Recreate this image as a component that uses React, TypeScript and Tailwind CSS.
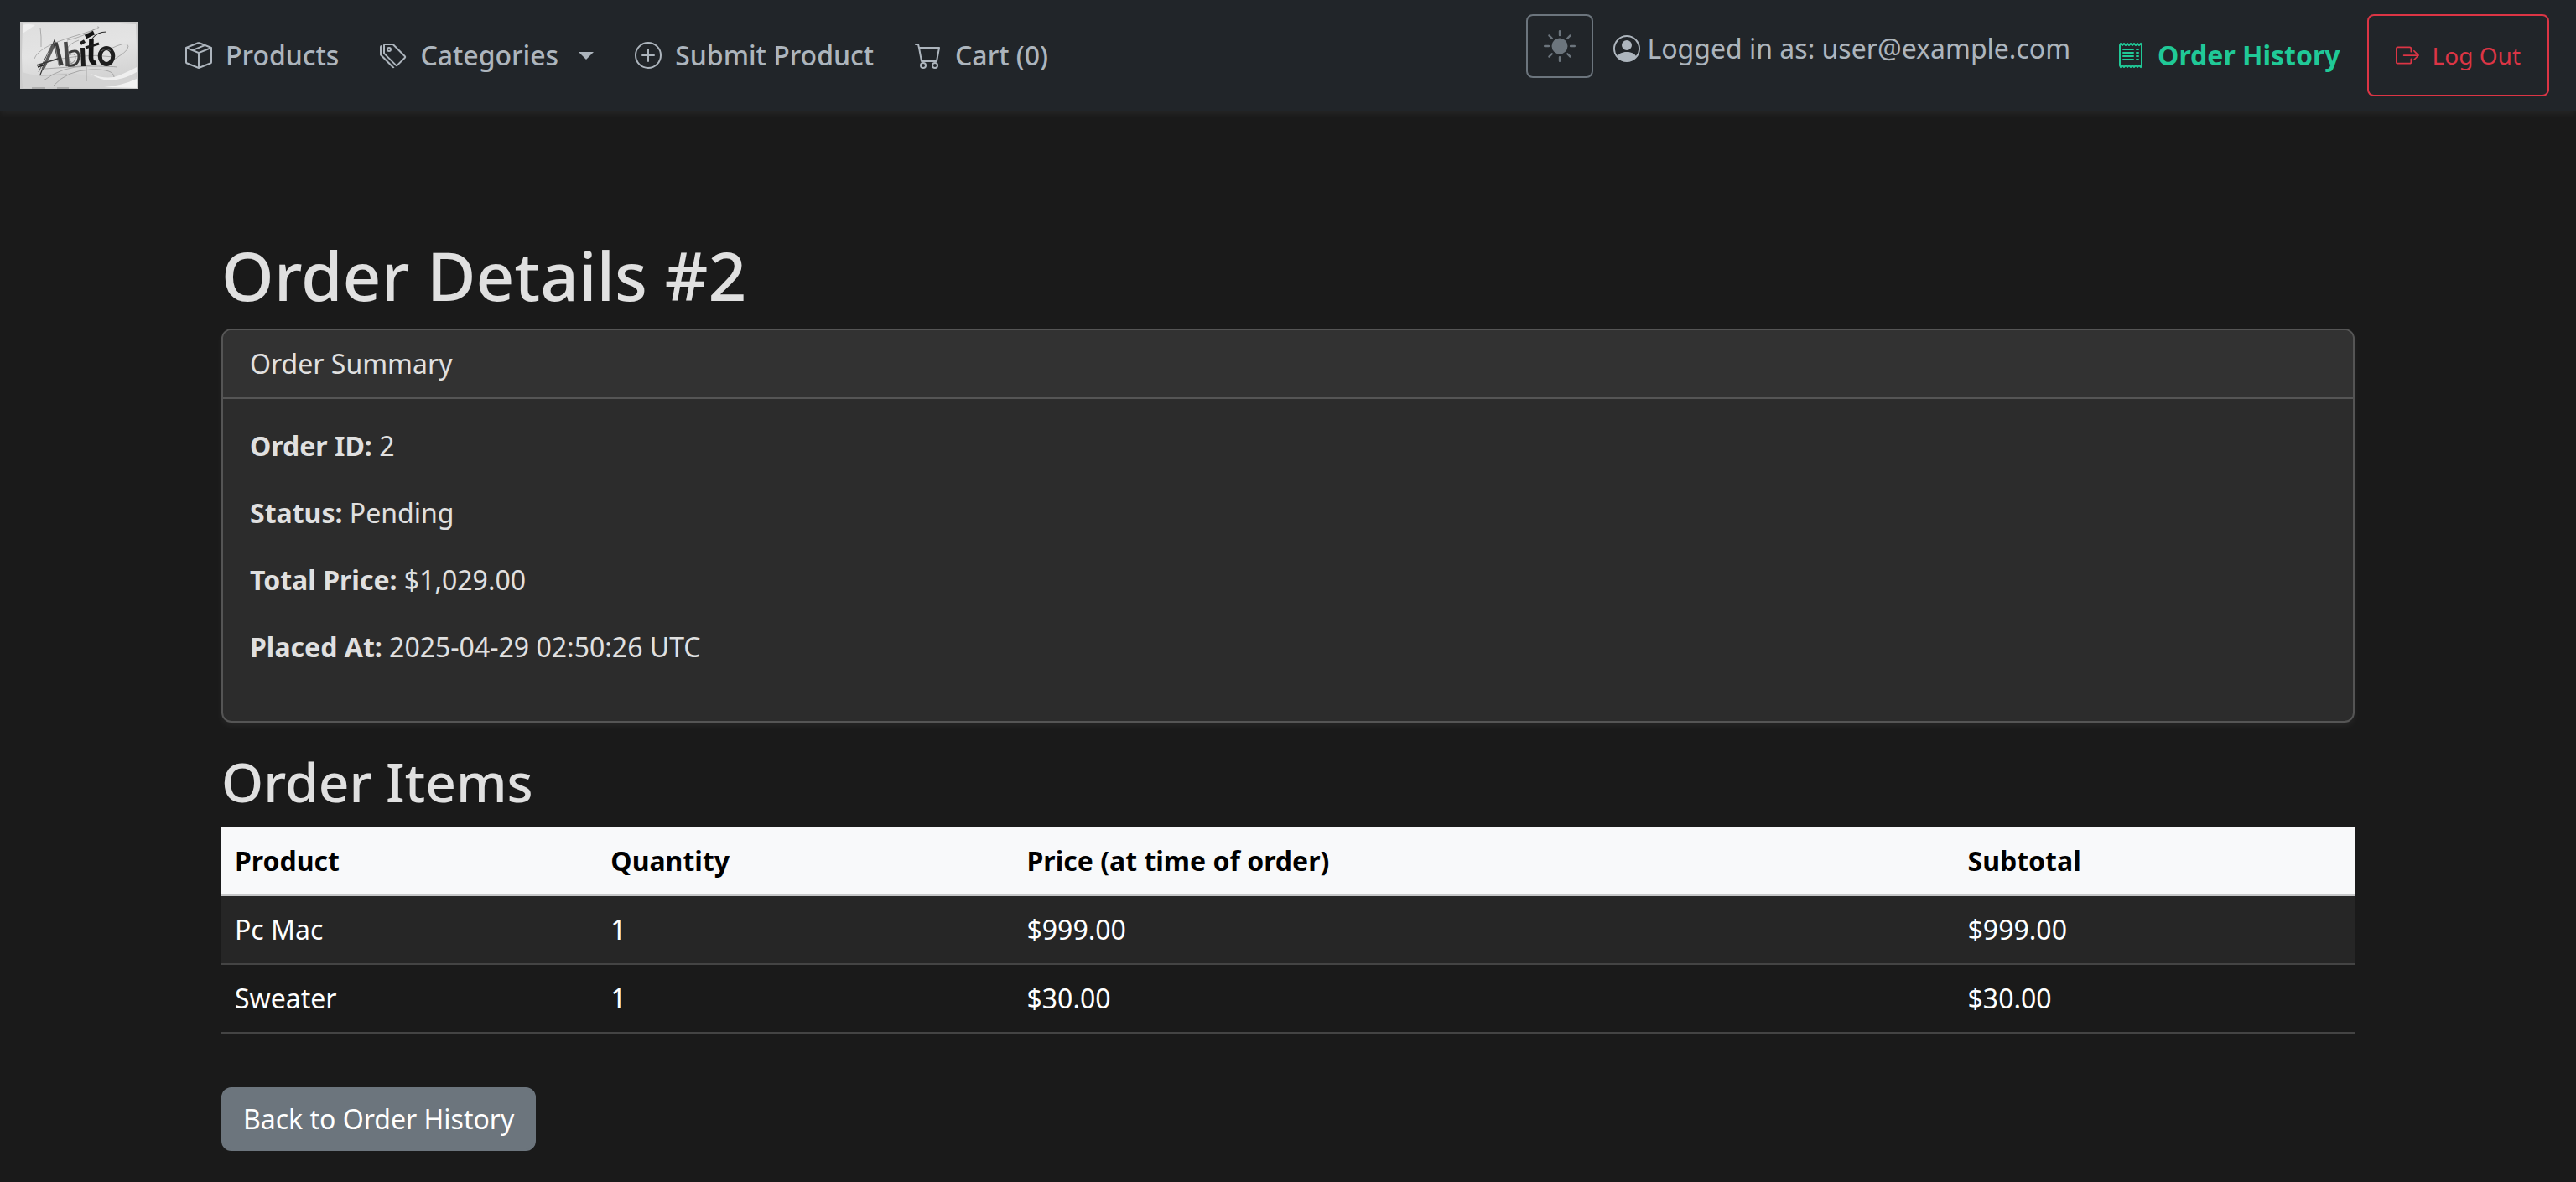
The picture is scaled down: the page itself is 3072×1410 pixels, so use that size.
import type { ReactNode } from "react";
import {
  BsBoxSeam,
  BsTags,
  BsPlusCircle,
  BsCart,
  BsSunFill,
  BsPersonCircle,
  BsReceipt,
  BsBoxArrowRight,
} from "react-icons/bs";

const items = [
  { product: "Pc Mac", quantity: 1, price: "$999.00", subtotal: "$999.00" },
  { product: "Sweater", quantity: 1, price: "$30.00", subtotal: "$30.00" },
];

const summary = [
  ["Order ID:", "2"],
  ["Status:", "Pending"],
  ["Total Price:", "$1,029.00"],
  ["Placed At:", "2025-04-29 02:50:26 UTC"],
];

function Logo() {
  return (
    <svg viewBox="0 0 141 80" className="h-20 w-[141px]" role="img" aria-label="Abito">
      <defs>
        <linearGradient id="paper" x1="0" y1="0" x2="0.3" y2="1">
          <stop offset="0" stopColor="#dedede" />
          <stop offset="0.5" stopColor="#e4e4e4" />
          <stop offset="1" stopColor="#d2d2d2" />
        </linearGradient>
      </defs>
      <rect width="141" height="80" fill="#cbcbcb" />
      <path d="M3 2 L20 1 L60 2 L100 1 L138 3 L139 30 L138 78 L90 79 L40 78 L3 79 L2 40Z" fill="url(#paper)" />
      <path d="M3 4 Q8 2 18 4 Q10 9 3 14Z" fill="#efefef" />
      <path d="M2 60 Q20 66 40 62 T90 68 Q112 74 139 66 V78 H3Z" fill="#d3d3d3" />
      <path d="M84 62 Q104 70 118 64 T139 54 V60 Q126 68 108 70 Q96 70 84 62Z" fill="#efefef" />
      <path d="M100 78 Q122 76 139 68 V79Z" fill="#f2f2f2" />
      <path d="M14 79 H30 M44 79 H58 M84 1.5 H100 M28 1.5 H44" stroke="#8d8d8d" strokeWidth="1" />
      <g fill="none" stroke="#858585" strokeWidth="0.6">
        <path d="M24 7 L25 18 L25 30" />
        <path d="M17 44 Q22 30 62 18 T92 6" />
        <path d="M56 22 Q76 18 90 8" />
        <path d="M106 33 Q128 22 129 29 T104 49" />
        <path d="M20 51 Q70 36 112 42" />
        <path d="M28 70 Q50 53 80 53 T116 54" />
        <path d="M40 76 Q56 58 84 57 T112 66" />
        <path d="M22 64 L56 63" />
        <path d="M79 54 V71" />
        <path d="M62 50 Q46 30 70 22" />
        <path d="M30 56 Q60 54 84 52" />
      </g>
      <g fill="none" strokeLinecap="butt" strokeLinejoin="miter">
        <path d="M24 63 L41 22 L51 52" stroke="#333" strokeWidth="1.2" />
        <path d="M27 57 L41 26" stroke="#5b5b5b" strokeWidth="3.4" />
        <path d="M22 60 L38 27" stroke="#333" strokeWidth="0.8" />
        <path d="M42 25 L49 52" stroke="#3c3c3c" strokeWidth="5.4" />
        <path d="M42 29 L46 51" stroke="#8b8b8b" strokeWidth="1" />
        <path d="M20 52 L48 43" stroke="#3a3a3a" strokeWidth="1.8" />
        <path d="M21 54 L30 51" stroke="#222" strokeWidth="1.4" />
        <path d="M54.5 24 L57 53" stroke="#484848" strokeWidth="4.2" />
        <path d="M53 24 L54 53" stroke="#222" strokeWidth="1" />
        <path d="M58 37 Q70 31 70 42 Q69 54 57 52" stroke="#3a3a3a" strokeWidth="3" />
        <path d="M58 40 Q66 36 66 43 Q65 50 58 50" stroke="#777" strokeWidth="0.8" />
        <path d="M74.5 31 L75.5 53" stroke="#1d1d1d" strokeWidth="5" />
        <path d="M72 26 L77 23" stroke="#1d1d1d" strokeWidth="4" />
        <path d="M85 20 L84.5 43 Q85 50 91 49" stroke="#151515" strokeWidth="5.6" />
        <path d="M78 31 L94 26" stroke="#1d1d1d" strokeWidth="3" />
        <path d="M78 18 L88 13" stroke="#151515" strokeWidth="5" />
        <path d="M86 20 Q92 12 103 12" stroke="#2b2b2b" strokeWidth="1.1" />
        <ellipse cx="103" cy="41" rx="7.8" ry="9.4" stroke="#1f1f1f" strokeWidth="5" />
        <path d="M97 35 Q102 30 108 35" stroke="#777" strokeWidth="0.8" />
      </g>
    </svg>
  );
}

function NavLink({ icon, children }: { icon: ReactNode; children: ReactNode }) {
  return (
    <li>
      <a href="#" className="flex items-center gap-4 font-medium text-[#adb5bd]">
        {icon}
        {children}
      </a>
    </li>
  );
}

export default function App() {
  return (
    <div className="min-h-screen bg-[#1a1a1a] font-['Noto_Sans',sans-serif] text-[32px] leading-[48px] text-[#e0e0e0]">
      <nav className="flex min-h-33 items-center justify-between bg-[#212529] py-4 pr-8 pl-6 shadow-[0_4px_8px_rgba(255,255,255,0.05)]">
        <div className="flex items-center gap-14">
          <a href="#">
            <Logo />
          </a>
          <ul className="flex items-center gap-[49px]">
            <NavLink icon={<BsBoxSeam />}>Products</NavLink>
            <NavLink icon={<BsTags />}>
              Categories
              <span className="ml-2 border-x-9 border-t-9 border-x-transparent border-t-[#adb5bd]" />
            </NavLink>
            <NavLink icon={<BsPlusCircle />}>Submit Product</NavLink>
            <NavLink icon={<BsCart />}>Cart (0)</NavLink>
          </ul>
        </div>
        <div className="flex items-center">
          <div className="mr-14 flex items-center gap-6 self-start">
            <button
              type="button"
              aria-label="Toggle theme"
              className="flex h-19 w-20 items-center justify-center rounded-lg border-2 border-[#6c757d] text-[38px] text-[#6c757d]"
            >
              <BsSunFill />
            </button>
            <span className="flex items-center gap-2 pt-1.5 text-[#adb5bd]">
              <BsPersonCircle />
              Logged in as: user@example.com
            </span>
          </div>
          <a href="#" className="mr-8 flex items-center gap-4 font-bold text-[#20c997]">
            <BsReceipt />
            Order History
          </a>
          <button
            type="button"
            className="flex items-center gap-4 rounded-lg border-2 border-[#dc3545] px-8 py-[26px] text-[28px] leading-[42px] text-[#dc3545]"
          >
            <BsBoxArrowRight />
            Log Out
          </button>
        </div>
      </nav>

      <main className="mx-auto max-w-[2640px] px-12 pt-37 pb-6">
        <h1 className="mb-4 text-[80px] leading-[96px] font-medium">Order Details #2</h1>

        <section className="mb-8 overflow-hidden rounded-xl border-2 border-[#555555] bg-[#2c2c2c] shadow-[0_4px_8px_rgba(255,255,255,0.05)]">
          <div className="border-b-2 border-[#555555] bg-[#323232] px-8 py-4">Order Summary</div>
          <div className="p-8">
            {summary.map(([label, value]) => (
              <p key={label} className="mb-8">
                <strong className="font-bold">{label}</strong> {value}
              </p>
            ))}
          </div>
        </section>

        <h2 className="mb-4 text-[64px] leading-[77px] font-medium">Order Items</h2>

        <table className="mb-16 w-full border-collapse text-left text-white">
          <thead className="bg-[#f8f9fa] text-black">
            <tr className="border-b-2 border-[#c6c7c8]">
              <th className="p-4 font-bold">Product</th>
              <th className="p-4 font-bold">Quantity</th>
              <th className="p-4 font-bold">Price (at time of order)</th>
              <th className="p-4 font-bold">Subtotal</th>
            </tr>
          </thead>
          <tbody>
            {items.map((item) => (
              <tr key={item.product} className="border-b-2 border-[#444444] odd:bg-[#262626]">
                <td className="p-4">{item.product}</td>
                <td className="p-4">{item.quantity}</td>
                <td className="p-4">{item.price}</td>
                <td className="p-4">{item.subtotal}</td>
              </tr>
            ))}
          </tbody>
        </table>

        <a
          href="#"
          className="inline-block rounded-xl border-2 border-[#6c757d] bg-[#6c757d] px-6 py-3 text-white"
        >
          Back to Order History
        </a>
      </main>
    </div>
  );
}
